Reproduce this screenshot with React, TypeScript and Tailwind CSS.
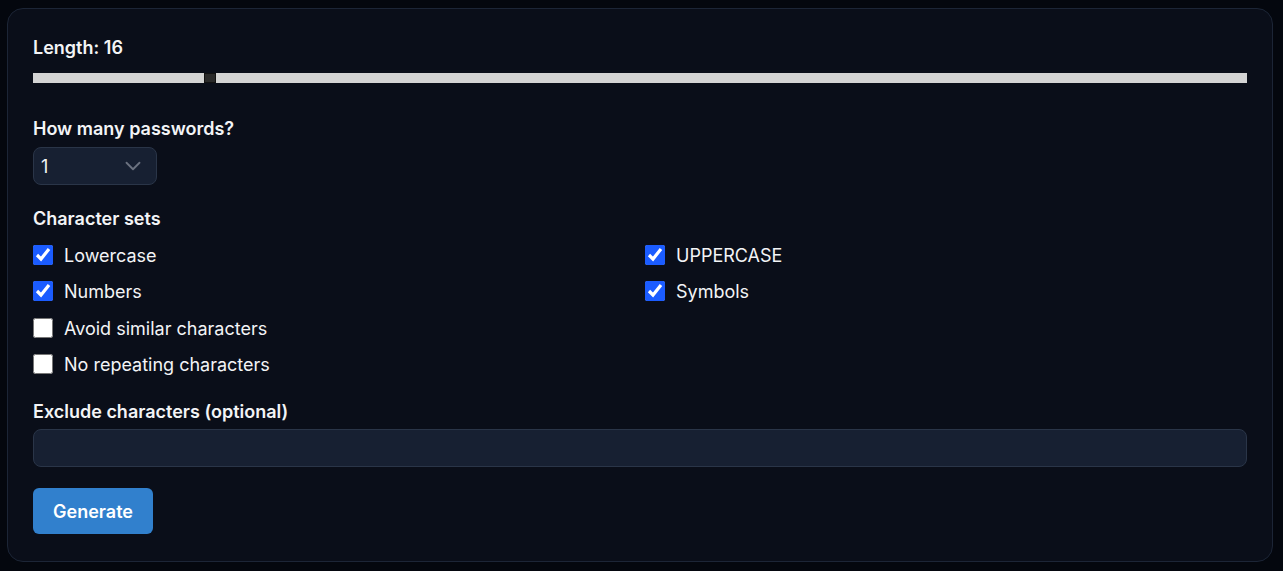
import React from "react";
import { ChevronDown } from "lucide-react";

const font = { fontFamily: 'Inter, "Open Sans", "Liberation Sans", sans-serif' };

function Check({ label, checked }: { label: string; checked: boolean }) {
  return (
    <label className="flex h-6 items-center gap-[11px] text-[18px] text-[#f3f4f6]">
      <input type="checkbox" defaultChecked={checked} className="m-0 h-5 w-5 shrink-0 accent-[#1b5cff]" />
      <span className="pt-[2px] leading-6">{label}</span>
    </label>
  );
}

export default function App() {
  return (
    <div className="min-h-[571px] bg-[#04070e] pt-2 pl-[7px] pr-[10px] pb-[9px]" style={font}>
      <div className="rounded-2xl border border-[#1c2536] bg-[#0a0e19] px-[25px] pt-[26px] pb-[27px]">
        <div className="h-6 text-[18px] font-semibold leading-[26px] text-[#f3f4f6]">Length: 16</div>
        <div className="mt-[14px] flex h-[10px] items-stretch">
          <div className="w-[171px] bg-[#d4d4d4]" />
          <div className="w-[12px] border border-[#111] bg-[#2a2a2a]" />
          <div className="flex-1 bg-[#d4d4d4]" />
        </div>

        <div className="mt-[33px] h-6 text-[18px] font-semibold leading-[26px] text-[#f3f4f6]">How many passwords?</div>
        <div className="mt-[7px] flex h-[38px] w-[124px] items-center justify-between rounded-lg border border-[#2a3548] bg-[#172032] pl-[7px] pr-[10px] text-[18px] text-[#f3f4f6]">
          <span>1</span>
          <ChevronDown size={26} strokeWidth={1.7} className="text-[#6b7280]" />
        </div>

        <div className="mt-[21px] h-6 text-[18px] font-semibold leading-[26px] text-[#f3f4f6]">Character sets</div>
        <div className="mt-[13px] grid grid-cols-2 gap-x-[10px] gap-y-[12.4px]">
          <Check label="Lowercase" checked />
          <Check label="UPPERCASE" checked />
          <Check label="Numbers" checked />
          <Check label="Symbols" checked />
          <Check label="Avoid similar characters" checked={false} />
          <div />
          <Check label="No repeating characters" checked={false} />
        </div>

        <div className="mt-[23px] h-6 text-[18px] font-semibold leading-[26px] text-[#f3f4f6]">Exclude characters (optional)</div>
        <input
          type="text"
          className="mt-[6px] block h-[38px] w-full rounded-lg border border-[#2a3548] bg-[#172032] px-3 text-[18px] text-[#f3f4f6] outline-none"
        />

        <button className="mt-[21px] h-[46px] w-[120px] rounded-md bg-[#3180cd] text-[18px] font-semibold text-white">
          Generate
        </button>
      </div>
    </div>
  );
}
